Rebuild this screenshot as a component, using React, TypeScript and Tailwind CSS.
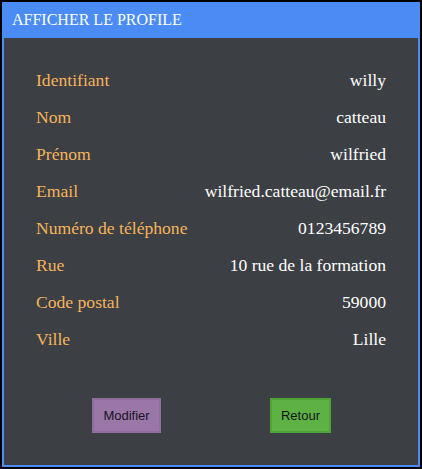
const rows: [string, string][] = [
  ["Identifiant", "willy"],
  ["Nom", "catteau"],
  ["Prénom", "wilfried"],
  ["Email", "wilfried.catteau@email.fr"],
  ["Numéro de téléphone", "0123456789"],
  ["Rue", "10 rue de la formation"],
  ["Code postal", "59000"],
  ["Ville", "Lille"],
];

export default function App() {
  return (
    <div className="w-[422px] h-[469px] bg-black p-[2px] flex flex-col">
      {/* Header */}
      <div className="h-[36px] bg-[#4b8bf4] px-[10px] flex items-center text-white text-[16px] font-['Liberation_Serif',serif]">
        AFFICHER LE PROFILE
      </div>

      {/* Body */}
      <div className="flex-1 bg-[#3c3f43] border-2 border-t-0 border-[#4b8bf4] px-[32px] pt-[24px]">
        {rows.map(([label, value]) => (
          <div
            key={label}
            className="h-[37px] flex items-center justify-between text-[17.6px] font-['Liberation_Serif',serif]"
          >
            <span className="text-[#f6b45c]">{label}</span>
            <span className="text-white">{value}</span>
          </div>
        ))}

        <div className="grid grid-cols-2 justify-items-center mt-[40px]">
          <button className="h-[35px] px-[9px] ml-[6px] bg-[#9b77a9] border-2 border-[#906d9e] text-[13px] text-[#15151f] font-['Liberation_Sans',sans-serif]">
            Modifier
          </button>
          <button className="h-[35px] px-[9px] ml-[4px] bg-[#5db243] border-2 border-[#4fa437] text-[13px] text-[#15151f] font-['Liberation_Sans',sans-serif]">
            Retour
          </button>
        </div>
      </div>
    </div>
  );
}
